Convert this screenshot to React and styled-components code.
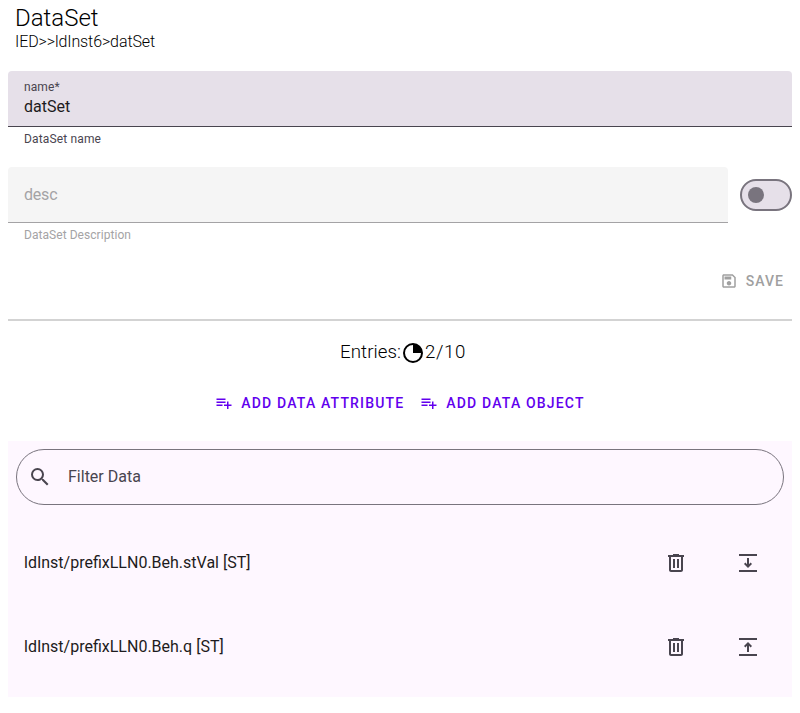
import React from 'react';
import styled, { createGlobalStyle } from 'styled-components';

const GlobalStyle = createGlobalStyle`
  * { box-sizing: border-box; }
  body { margin: 0; background: #fff; font-family: Roboto, sans-serif; }
`;

const Page = styled.main`
  padding: 0 8px;
`;

const Header = styled.header`
  height: 71px;
  padding: 4px 7px 0;
  color: #000;
  font-weight: 300;
`;

const Title = styled.h2`
  margin: 0;
  font-size: 24px;
  font-weight: 300;
  line-height: 28px;
`;

const Path = styled.div`
  font-size: 16px;
  line-height: 19px;
  letter-spacing: -0.1px;
`;

const FieldRow = styled.div`
  display: flex;
  gap: 12px;
  height: 96px;
`;

const Field = styled.div`
  flex: 1;
`;

const FieldBox = styled.div`
  display: flex;
  flex-direction: column;
  justify-content: center;
  height: 56px;
  padding: 0 16px;
  border-radius: 4px 4px 0 0;
  background: ${(p) => (p.$disabled ? '#f5f5f5' : '#e6e0e9')};
  border-bottom: 1px solid ${(p) => (p.$disabled ? '#a4a3a5' : '#49454f')};
`;

const FloatingLabel = styled.span`
  font-size: 12px;
  line-height: 16px;
  letter-spacing: 0.1px;
  color: #49454f;
`;

const FieldText = styled.span`
  font-size: 16px;
  line-height: 24px;
  letter-spacing: ${(p) => (p.$disabled ? '-0.2px' : '0')};
  color: ${(p) => (p.$disabled ? '#a4a3a5' : '#1d1b20')};
`;

const Supporting = styled.div`
  padding: 4px 16px 0;
  font-size: 12px;
  line-height: 16px;
  letter-spacing: ${(p) => (p.$disabled ? '0.05px' : '0.15px')};
  color: ${(p) => (p.$disabled ? '#a4a3a5' : '#49454f')};
`;

const Switch = styled.div`
  display: flex;
  align-items: center;
  width: 52px;
  height: 32px;
  margin-top: 12px;
  padding-left: 6px;
  border: 2px solid #79747e;
  border-radius: 16px;
  background: #e6e0e9;
`;

const Handle = styled.div`
  width: 16px;
  height: 16px;
  border-radius: 50%;
  background: #79747e;
`;

const Actions = styled.div`
  display: flex;
  justify-content: ${(p) => p.$justify};
`;

const SaveBar = styled(Actions)`
  height: 58px;
`;

const Button = styled.button`
  display: inline-flex;
  align-items: center;
  gap: 8px;
  height: 36px;
  padding: 0 8px;
  border: 0;
  background: transparent;
  color: ${(p) => (p.disabled ? '#a0a0a0' : '#6200ee')};
  font: 500 14px Roboto, sans-serif;
  letter-spacing: ${(p) => (p.disabled ? '1px' : '1.17px')};
  text-transform: uppercase;
`;

const Divider = styled.hr`
  height: 2px;
  margin: -2px 0 0;
  border: 0;
  background: #d3d3d3;
`;

const Entries = styled.div`
  display: flex;
  align-items: center;
  justify-content: center;
  height: 64px;
  padding: 0 0 2px 6px;
  color: #000;
  font-size: 18.72px;
  font-weight: 300;
`;

const Label = styled.span`
  letter-spacing: 0.05px;
`;

const Count = styled.span`
  letter-spacing: 0.6px;
`;

const Panel = styled.section`
  height: 256px;
  margin-top: 20px;
  padding: 8px 8px 0;
  background: #fef7ff;
`;

const Search = styled.div`
  display: flex;
  align-items: center;
  gap: 16px;
  height: 56px;
  margin-bottom: 16px;
  padding: 0 11px;
  border: 1px solid #79747e;
  border-radius: 28px;
  color: #49454f;
  font-size: 16px;
`;

const SearchText = styled.span`
  padding-bottom: 2px;
`;

const Row = styled.div`
  display: flex;
  align-items: center;
  height: 84px;
  padding: 0 24px 0 8px;
  color: #1d1b20;
  font-size: 16px;
`;

const RowText = styled.span`
  flex: 1;
  padding-bottom: 2px;
`;

const RowIcons = styled.div`
  display: flex;
  gap: 48px;
  color: #49454f;
`;

const Svg = styled.svg`
  display: block;
  flex: none;
  width: ${(p) => p.$size}px;
  height: ${(p) => p.$size}px;
  fill: currentColor;
`;

const paths = {
  save: 'M17 3H5c-1.11 0-2 .9-2 2v14c0 1.1.89 2 2 2h14c1.1 0 2-.9 2-2V7l-4-4zm2 16H5V5h11.17L19 7.83V19zm-7-7c-1.66 0-3 1.34-3 3s1.34 3 3 3 3-1.34 3-3-1.34-3-3-3zM6 6h9v4H6z',
  add: 'M14 10H2v2h12v-2zm0-4H2v2h12V6zm4 8v-4h-2v4h-4v2h4v4h2v-4h4v-2h-4zM2 16h8v-2H2v2z',
  search: 'M15.5 14h-.79l-.28-.27A6.47 6.47 0 0 0 16 9.5 6.5 6.5 0 1 0 9.5 16c1.61 0 3.09-.59 4.23-1.57l.27.28v.79l5 4.99L20.49 19l-4.99-5zm-6 0C7.01 14 5 11.99 5 9.5S7.01 5 9.5 5 14 7.01 14 9.5 11.99 14 9.5 14z',
  remove: 'M7 21c-1.1 0-2-.9-2-2V6H4V4h5V3h6v1h5v2h-1v13c0 1.1-.9 2-2 2H7zM17 6H7v13h10V6zM9 17h2V8H9v9zm4 0h2V8h-2v9z',
  down: 'M3 3h18v2H3zM3 19h18v2H3zM11 7h2v6.2l1.6-1.6L16 13l-4 4-4-4 1.4-1.4 1.6 1.6z',
  up: 'M3 3h18v2H3zM3 19h18v2H3zM11 17h2v-6.2l1.6 1.6L16 11l-4-4-4 4 1.4 1.4 1.6-1.6z',
};

function Icon({ name, size = 24 }) {
  return (
    <Svg $size={size} viewBox="0 0 24 24" aria-hidden="true">
      <path d={paths[name]} />
    </Svg>
  );
}

const PieSvg = styled.svg`
  display: block;
  flex: none;
  width: 24px;
  height: 24px;
  margin-top: 1px;
`;

function Pie() {
  return (
    <PieSvg viewBox="0 0 24 24" aria-hidden="true">
      <circle cx="12" cy="12" r="9" fill="none" stroke="#000" strokeWidth="2" />
      <path d="M12 12V3a9 9 0 0 1 9 9z" />
    </PieSvg>
  );
}

const entries = [
  { text: 'ldInst/prefixLLN0.Beh.stVal [ST]', move: 'down' },
  { text: 'ldInst/prefixLLN0.Beh.q [ST]', move: 'up' },
];

export default function App() {
  return (
    <Page>
      <GlobalStyle />
      <Header>
        <Title>DataSet</Title>
        <Path>IED&gt;&gt;ldInst6&gt;datSet</Path>
      </Header>
      <FieldRow>
        <Field>
          <FieldBox>
            <FloatingLabel>name*</FloatingLabel>
            <FieldText>datSet</FieldText>
          </FieldBox>
          <Supporting>DataSet name</Supporting>
        </Field>
      </FieldRow>
      <FieldRow>
        <Field>
          <FieldBox $disabled>
            <FieldText $disabled>desc</FieldText>
          </FieldBox>
          <Supporting $disabled>DataSet Description</Supporting>
        </Field>
        <Switch><Handle /></Switch>
      </FieldRow>
      <SaveBar $justify="flex-end">
        <Button disabled><Icon name="save" size={18} />Save</Button>
      </SaveBar>
      <Divider />
      <Entries>
        <Label>Entries:</Label><Pie /><Count>2/10</Count>
      </Entries>
      <Actions $justify="center">
        <Button><Icon name="add" size={18} />Add data attribute</Button>
        <Button><Icon name="add" size={18} />Add data object</Button>
      </Actions>
      <Panel>
        <Search><Icon name="search" /><SearchText>Filter Data</SearchText></Search>
        {entries.map((entry) => (
          <Row key={entry.text}>
            <RowText>{entry.text}</RowText>
            <RowIcons>
              <Icon name="remove" />
              <Icon name={entry.move} />
            </RowIcons>
          </Row>
        ))}
      </Panel>
    </Page>
  );
}
